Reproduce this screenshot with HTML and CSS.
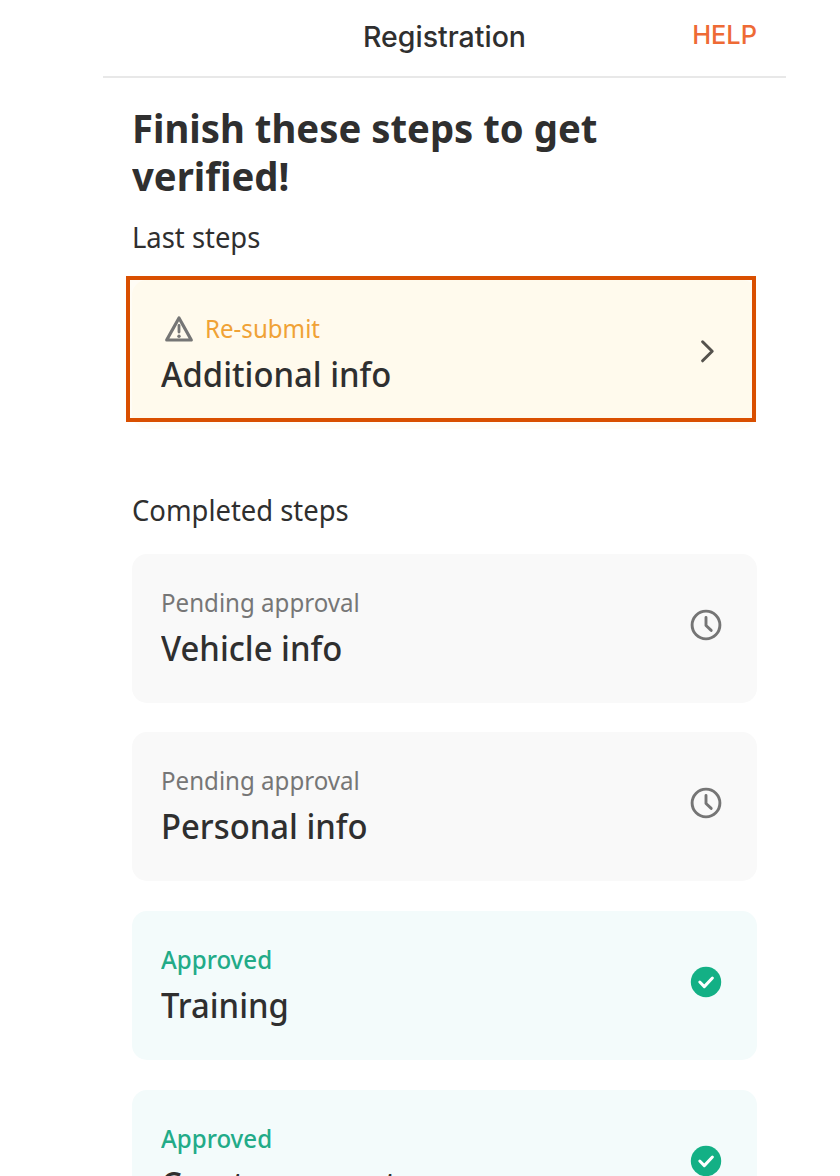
FILE: index.html
```html
<!DOCTYPE html>
<html lang="en">
<head>
    <meta charset="UTF-8">
    <meta name="viewport" content="width=device-width, initial-scale=1.0">
    <title>Registration</title>
    <link rel="stylesheet" href="styles.css">
</head>
<body>
    <div class="app">
        <header class="topbar">
            <span class="topbar-title">Registration</span>
            <a class="help">HELP</a>
        </header>

        <main class="content">
            <h1>Finish these steps to get verified!</h1>

            <h2>Last steps</h2>
            <div class="card resubmit">
                <div class="card-text">
                    <p class="status">
                        <svg class="warning" viewBox="0 0 30 28" width="30" height="28">
                            <path d="M15 3 L27.3 25 H2.7 Z" fill="none" stroke="#757575" stroke-width="3.2" stroke-linejoin="round"/>
                            <path d="M15 10.5 V17" stroke="#757575" stroke-width="2.8" stroke-linecap="round"/>
                            <circle cx="15" cy="21.3" r="1.7" fill="#757575"/>
                        </svg>
                        <span class="label">Re-submit</span>
                    </p>
                    <p class="name">Additional info</p>
                </div>
                <svg class="icon" viewBox="0 0 32 32" width="32" height="32">
                    <path d="M12.6 6.8 L22.2 16.3 L12.6 25.8" fill="none" stroke="#55524d" stroke-width="3" stroke-linecap="round" stroke-linejoin="round"/>
                </svg>
                <div class="highlight"></div>
            </div>

            <h2 class="completed">Completed steps</h2>
            <div class="card pending">
                <div class="card-text">
                    <p class="status"><span class="label">Pending approval</span></p>
                    <p class="name">Vehicle info</p>
                </div>
                <svg class="icon" viewBox="0 0 32 32" width="32" height="32">
                    <circle cx="16" cy="16" r="13.9" fill="none" stroke="#757575" stroke-width="2.9"/>
                    <path d="M16 8.5 V16.5 L21.2 21.4" fill="none" stroke="#757575" stroke-width="2.9" stroke-linecap="round" stroke-linejoin="round"/>
                </svg>
            </div>
            <div class="card pending">
                <div class="card-text">
                    <p class="status"><span class="label">Pending approval</span></p>
                    <p class="name">Personal info</p>
                </div>
                <svg class="icon" viewBox="0 0 32 32" width="32" height="32">
                    <circle cx="16" cy="16" r="13.9" fill="none" stroke="#757575" stroke-width="2.9"/>
                    <path d="M16 8.5 V16.5 L21.2 21.4" fill="none" stroke="#757575" stroke-width="2.9" stroke-linecap="round" stroke-linejoin="round"/>
                </svg>
            </div>
            <div class="card approved">
                <div class="card-text">
                    <p class="status"><span class="label">Approved</span></p>
                    <p class="name">Training</p>
                </div>
                <svg class="icon" viewBox="0 0 32 32" width="32" height="32">
                    <circle cx="16" cy="16" r="15.2" fill="#13b085"/>
                    <path d="M9.8 16 L14.3 20.6 L22.4 12" fill="none" stroke="#fff" stroke-width="3" stroke-linecap="round" stroke-linejoin="round"/>
                </svg>
            </div>
            <div class="card approved">
                <div class="card-text">
                    <p class="status"><span class="label">Approved</span></p>
                    <p class="name">Create account</p>
                </div>
                <svg class="icon" viewBox="0 0 32 32" width="32" height="32">
                    <circle cx="16" cy="16" r="15.2" fill="#13b085"/>
                    <path d="M9.8 16 L14.3 20.6 L22.4 12" fill="none" stroke="#fff" stroke-width="3" stroke-linecap="round" stroke-linejoin="round"/>
                </svg>
            </div>
        </main>
    </div>
</body>
</html>
```
FILE: styles.css
```css
* {
    box-sizing: border-box;
}

body {
    margin: 0;
    height: 1176px;
    overflow: hidden;
    background: #fff;
    color: #2f2f2f;
    font-family: "Noto Sans", sans-serif;
}

h1, h2, p {
    margin: 0;
}

.app {
    width: 683px;
    margin-left: 103px;
}

/* Top bar */
.topbar {
    display: grid;
    grid-template-columns: 1fr auto 1fr;
    align-items: center;
    height: 78px;
    padding: 0 29px 4px;
    border-bottom: 2px solid #e8e8e8;
    font-family: Inter, sans-serif;
}

.topbar-title {
    grid-column: 2;
    font-size: 28.5px;
    font-weight: 500;
}

.help {
    justify-self: end;
    padding-bottom: 3px;
    color: #ee6a35;
    font-size: 25.4px;
    font-weight: 450;
}

.content {
    padding: 26px 29px 0;
}

/* Slightly narrowed text */
h1, h2, .label, .name {
    transform: scaleX(0.945);
    transform-origin: left;
}

h1 {
    font-size: 40px;
    line-height: 47.5px;
    font-weight: 700;
    transform: scaleX(0.957);
}

h2 {
    margin-top: 17.5px;
    font-size: 29px;
    line-height: 40px;
    font-weight: 400;
}

.completed {
    margin-top: 60.8px;
}

/* Step cards */
.card {
    position: relative;
    display: flex;
    align-items: center;
    justify-content: space-between;
    height: 149px;
    margin-bottom: 29.8px;
    padding: 0 35px 0 29px;
    border-radius: 15px;
}

h2 + .card {
    margin-top: 23.7px;
}

.card-text {
    padding-bottom: 1px;
}

.status {
    display: flex;
    align-items: center;
    gap: 11px;
    font-size: 25.5px;
    line-height: 36px;
}

.name {
    font-size: 35px;
    line-height: 48px;
    margin-top: 4px;
    font-weight: 500;
    transform: scaleX(0.937);
}

.icon {
    margin-bottom: 7px;
}

.warning {
    margin: 3px 0 0 3px;
}

.resubmit {
    z-index: 0;
    background: #fffdf7;
}

.resubmit .card-text {
    padding-bottom: 2px;
}

.resubmit .status {
    color: #f0a236;
}

.pending {
    background: #f9f9f9;
}

.pending .status {
    color: #767676;
}

.approved {
    background: #f3fbfb;
}

.approved .status {
    color: #22ab88;
    font-weight: 500;
}

/* Frame around the card that needs attention */
.highlight {
    position: absolute;
    z-index: -1;
    top: -4px;
    left: -6px;
    width: 630px;
    height: 146px;
    border: 4px solid #d94f00;
    background: rgba(255, 215, 130, 0.08);
}
```
